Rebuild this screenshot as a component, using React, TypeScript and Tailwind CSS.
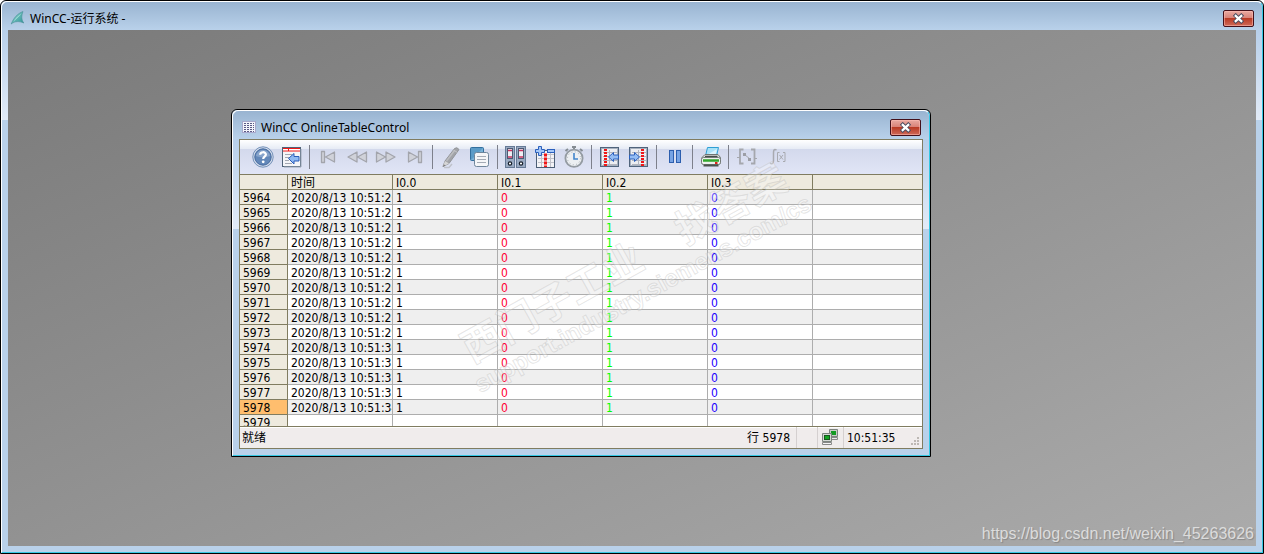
import type { ReactNode } from "react";

type WindowProps = {
  title: string;
  icon: ReactNode;
  className?: string;
  children: ReactNode;
};

const CloseButton = () => (
  <button
    type="button"
    aria-label="Close"
    className="flex h-[17px] w-[31px] items-center justify-center rounded-xs border border-[#43101a] bg-[linear-gradient(#e9aaa2,#d98379_45%,#b93a25_50%,#cf6a58)] shadow-[inset_0_0_0_1px_rgba(255,190,180,0.55)]"
  >
    <svg width="13" height="11" viewBox="0 0 13 11" aria-hidden="true">
      <path
        d="M3.7 2.7 L9.3 8.3 M9.3 2.7 L3.7 8.3"
        stroke="#4a4c60"
        strokeWidth="4"
        strokeLinecap="square"
      />
      <path
        d="M3.7 2.9 L9.3 8.1 M9.3 2.9 L3.7 8.1"
        stroke="#fff"
        strokeWidth="2.2"
        strokeLinecap="square"
      />
    </svg>
  </button>
);

const SideFrame = () => (
  <div className="w-1.5 shrink-0 bg-[linear-gradient(#b7cfea,#e2ebf7_90px,#b9d1ea_90px)]" />
);

const AeroWindow = ({ title, icon, className = "", children }: WindowProps) => (
  <section
    className={`flex flex-col overflow-hidden rounded-t-md border border-black bg-[#b9d1ea] ${className}`}
  >
    <div className="flex flex-1 flex-col rounded-t-md border border-t-white border-r-[#35c8e4] border-b-[#35c8e4] border-l-white">
      <header className="flex h-7 items-center gap-1 rounded-t-md bg-[linear-gradient(#99b4d1,#b9d1ea)] px-2 pt-1">
        {icon}
        <h1 className="flex-1 pt-0.5 font-['Noto_Sans','Noto_Sans_CJK_SC',sans-serif] text-xs text-black">
          {title}
        </h1>
        <CloseButton />
      </header>
      <div className="flex flex-1">
        <SideFrame />
        <div className="flex min-w-0 flex-1 flex-col">{children}</div>
        <SideFrame />
      </div>
      <div className="h-1.5" />
    </div>
  </section>
);

const AppIcon = () => (
  <svg width="16" height="16" viewBox="0 0 16 16" aria-hidden="true">
    <defs>
      <linearGradient id="fin" x1="0" y1="0" x2="1" y2="1">
        <stop offset="0" stopColor="#8fd6cf" />
        <stop offset="1" stopColor="#2f9396" />
      </linearGradient>
    </defs>
    <path
      d="M13 1.5 C7.5 3.5 3.5 8 1.2 14 C5 11 9 11 13.8 13 C11.4 10 11.2 6 13 1.5Z"
      fill="url(#fin)"
      stroke="#4a8f97"
      strokeWidth="0.6"
    />
    <path d="M11.5 3.5 C7.5 6 5 8.5 3.5 12 C6 9 9 6.5 11.5 3.5Z" fill="#a9e4dc" />
  </svg>
);

const GridIcon = () => (
  <svg width="16" height="16" viewBox="0 0 16 16" aria-hidden="true">
    <rect x="1" y="2" width="14" height="12" fill="#f4f4fb" />
    <path d="M1 2.5H15M1 13.5H15M1.5 2V14M14.5 2V14" stroke="#a9a9cc" />
    <path
      d="M3 4.5H13M3 6.5H13M3 8.5H13M3 10.5H13M3 12.5H13"
      stroke="#5b5b85"
      strokeDasharray="2 1"
    />
  </svg>
);

const Icon = ({ children }: { children: ReactNode }) => (
  <svg
    width="24"
    height="24"
    viewBox="0 0 24 24"
    fill="none"
    className="shrink-0"
    aria-hidden="true"
  >
    {children}
  </svg>
);

const HelpIcon = () => (
  <Icon>
    <circle cx="12" cy="12" r="10.2" fill="#d5deec" stroke="#7390b8" />
    <circle cx="12" cy="12" r="8.2" fill="#6388b9" stroke="#44689d" />
    <path d="M4.8 11 A7.3 7.3 0 0 1 19.2 11 Q12 13.5 4.8 11Z" fill="#87a4cb" />
    <path
      d="M9.2 9.8 C9.2 6.4 14.9 6.4 14.9 9.6 C14.9 11.6 12.2 11.8 12.2 14"
      stroke="#fff"
      strokeWidth="2.2"
    />
    <circle cx="12.2" cy="16.8" r="1.4" fill="#fff" />
  </Icon>
);

const SheetIcon = () => (
  <Icon>
    <rect x="2.5" y="2.5" width="18" height="19" fill="#f4f5f8" stroke="#4f6276" />
    <rect x="3" y="3" width="17" height="3" fill="#fff" />
    <path d="M3 3.5H20M3 6H20M8.5 3V6" stroke="#f01818" />
    <path d="M5 9.5H12M5 12.5H9M5 15.5H9M5 18.5H12" stroke="#a3a8b2" />
    <path
      d="M8.5 13.5 L14 8.5 V11.5 H19 V16 H14 V19Z"
      fill="#8fb9f3"
      stroke="#2a5cb8"
    />
    <path d="M21 4V22H4" stroke="#9ca6b5" />
  </Icon>
);

const mediaPaths = {
  first: "M5.5 6.5H8.5V17.5H5.5Z M18.5 7V17L9.5 12Z",
  rewind: "M12 7V17L3 12Z M21.5 7V17L12.5 12Z",
  forward: "M2.5 7V17L11.5 12Z M12 7V17L21 12Z",
  last: "M5.5 7V17L14.5 12Z M15.5 6.5H18.5V17.5H15.5Z",
};

const MediaIcon = ({ kind }: { kind: keyof typeof mediaPaths }) => (
  <Icon>
    <path
      d={mediaPaths[kind]}
      fill="#d0d2d9"
      stroke="#a3a5ac"
      strokeWidth="1.3"
      strokeLinejoin="round"
    />
  </Icon>
);

const PencilIcon = () => (
  <Icon>
    <path d="M5 22.5H10L13 19" stroke="#bfc2ca" strokeWidth="1.5" />
    <path d="M4 21.5 L6 16 L15.5 3.5 Q18 1.5 20 4.5 L10 18.5Z" fill="#a2a4a8" stroke="#939599" />
    <path d="M7.5 16 L15.5 5.5" stroke="#bcbdc0" strokeWidth="1.5" />
    <path d="M4 21.5L6 16L10 18.5Z" fill="#d6d6d6" />
    <path d="M3.5 22L5 19.5L6.5 20.5Z" fill="#777" />
    <path d="M14.5 5L18.5 7.5" stroke="#c4c5c8" />
  </Icon>
);

const CopyIcon = () => (
  <Icon>
    <rect x="2.5" y="2.5" width="13" height="13" rx="1" fill="#5b9bc7" stroke="#34709e" />
    <path d="M3 15L15 3V15Z" fill="#79b2d7" />
    <rect x="6.5" y="7.5" width="14" height="14" rx="2" fill="#f5f6f8" stroke="#70869b" />
    <path d="M9 11.5H18M9 14.5H18M9 17.5H18" stroke="#a4abb5" />
  </Icon>
);

const BindersIcon = () => (
  <Icon>
    {[1.5, 12.5].map((x) => (
      <g key={x} transform={`translate(${x} 0)`}>
        <rect x="0" y="1.5" width="9" height="21" fill="#9aaac2" stroke="#667a96" />
        <rect x="2" y="3.5" width="5" height="10" fill="#eeeff4" stroke="#4c5a72" />
        <path d="M2.5 5.5H6.5M2.5 12H6.5" stroke="#c8315e" strokeWidth="1.6" />
        <circle cx="4.5" cy="18.5" r="1.7" fill="#fff" stroke="#18202c" strokeWidth="1.2" />
      </g>
    ))}
  </Icon>
);

const ColumnsIcon = () => (
  <Icon>
    <rect x="3.5" y="5.5" width="18" height="17" fill="#f3f3f6" stroke="#4c5e75" />
    <path d="M5 9.5H21M5 13.5H21M5 17.5H21M8.5 8V22M17.5 8V22" stroke="#c1c2ca" />
    <path d="M12.5 8.5V22" stroke="#f01414" strokeWidth="3" strokeDasharray="3 1" />
    <path
      d="M5.5 1.5H8.5V4.5H11.5V7.5H8.5V10.5H5.5V7.5H2.5V4.5H5.5Z"
      fill="#a5c7f8"
      stroke="#2b60bd"
    />
    <rect x="14.5" y="4.5" width="7" height="3" fill="#a5c7f8" stroke="#2b60bd" />
  </Icon>
);

const ClockIcon = () => (
  <Icon>
    <path d="M10 2H14M12 2V5M3.5 6L6 4M18 4L20.5 6" stroke="#858c92" strokeWidth="2" />
    <circle cx="12" cy="13.3" r="8.6" fill="#eceff2" stroke="#949ba2" strokeWidth="1.8" />
    <circle cx="12" cy="13.3" r="6.5" stroke="#a8afb5" strokeDasharray="1 2.4" />
    <path d="M12 8V14H16" stroke="#4386cb" strokeWidth="1.6" />
  </Icon>
);

const SelectColumnIcon = ({ flip = false }: { flip?: boolean }) => (
  <Icon>
    <rect x="2.5" y="2.5" width="18" height="19" fill="#eceef2" stroke="#50647c" />
    <rect x="3.5" y="3.5" width="16" height="17" stroke="#a7b1bf" />
    <path d="M5 7.5H19M5 11.5H19M5 15.5H19M5 19.5H19M11.5 5V20" stroke="#b3b6bf" />
    <path
      d={flip ? "M15.5 4V21" : "M7.5 4V21"}
      stroke="#ef1717"
      strokeWidth="3"
      strokeDasharray="2 1"
    />
    <path
      d={
        flip
          ? "M12.5 12 L7.5 7.5 V10 H2.5 V14 H7.5 V16.5Z"
          : "M10.5 12 L15.5 7.5 V10 H20.5 V14 H15.5 V16.5Z"
      }
      fill="#94bdf4"
      stroke="#2b60bd"
    />
  </Icon>
);

const PauseIcon = () => (
  <Icon>
    <rect x="6.5" y="5.5" width="4" height="12" fill="#76a3e4" stroke="#2c5eae" />
    <rect x="13.5" y="5.5" width="4" height="12" fill="#76a3e4" stroke="#2c5eae" />
  </Icon>
);

const PrinterIcon = () => (
  <Icon>
    <path d="M6.5 11 L8.5 2.5H19.5L17.5 11Z" fill="#a8e2f8" stroke="#2f9fd4" />
    <path d="M8 10L18 4L16.5 10Z" fill="#d9f4fd" />
    <path d="M3 12.5L6 9.5H19L21.5 12.5V18H3Z" fill="#dce0de" stroke="#6f7673" />
    <path d="M6 11.5H18.5" stroke="#444b49" strokeWidth="1.5" />
    <rect x="2.5" y="12.5" width="19" height="7" rx="2" fill="#eef0ee" stroke="#737a76" />
    <path d="M4 15.5H20" stroke="#31a72d" strokeWidth="2.5" />
    <path d="M4.5 20.5H19.5" stroke="#4b524f" strokeWidth="2" />
    <rect x="16" y="17" width="2.5" height="2" fill="#e0231b" />
  </Icon>
);

const LinkIcon = () => (
  <Icon>
    <path d="M8.5 4.5H5V18.5H8.5M16 4.5H19.5V18.5H16" stroke="#a5a7ad" strokeWidth="1.8" />
    <path d="M2 12.5H5M19 13.5H22M9.5 9.5L15 14" stroke="#a5a7ad" />
    <rect x="8" y="8" width="3" height="3" fill="#9c9ea5" />
    <rect x="13" y="13" width="3" height="3" fill="#9c9ea5" />
  </Icon>
);

const FunctionIcon = () => (
  <Icon>
    <path
      d="M12.5 5 C10 3.5 9.5 5.5 9.5 8 V16 C9.5 18.5 7.5 19.5 6 18"
      stroke="#a8aab0"
      strokeWidth="1.5"
    />
    <path
      d="M15.5 7.5H13.5V16.5H15.5M19 7.5H21V16.5H19M15.5 10L19 14.5M19 10L15.5 14.5"
      stroke="#a8aab0"
    />
  </Icon>
);

const NetworkIcon = () => (
  <svg width="17" height="17" viewBox="0 0 17 17" aria-hidden="true">
    <path d="M7.5 0.5H15.5V7.5H7.5Z" fill="#c8ccc8" stroke="#7d847f" />
    <rect x="9" y="2" width="5" height="4" fill="#139b22" />
    <path d="M8.5 8.5H15.5V10.5H8.5Z" fill="#ececec" stroke="#888" />
    <path d="M0.5 4.5H9.5V12.5H0.5Z" fill="#d4d8d4" stroke="#7d847f" />
    <rect x="2.5" y="6.5" width="5" height="4" fill="#12a522" stroke="#17551d" />
    <path d="M0.5 13.5H9.5V15.5H0.5Z" fill="#f4f4f4" stroke="#888" />
  </svg>
);

type Tool = { label: string; icon: ReactNode; disabled?: boolean };

const toolGroups: Tool[][] = [
  [
    { label: "Help", icon: <HelpIcon /> },
    { label: "Configuration dialog", icon: <SheetIcon /> },
  ],
  [
    { label: "First record", icon: <MediaIcon kind="first" />, disabled: true },
    { label: "Previous record", icon: <MediaIcon kind="rewind" />, disabled: true },
    { label: "Next record", icon: <MediaIcon kind="forward" />, disabled: true },
    { label: "Last record", icon: <MediaIcon kind="last" />, disabled: true },
  ],
  [
    { label: "Edit", icon: <PencilIcon />, disabled: true },
    { label: "Copy rows", icon: <CopyIcon /> },
  ],
  [
    { label: "Select archive", icon: <BindersIcon /> },
    { label: "Select columns", icon: <ColumnsIcon /> },
    { label: "Select time range", icon: <ClockIcon /> },
  ],
  [
    { label: "Previous column", icon: <SelectColumnIcon /> },
    { label: "Next column", icon: <SelectColumnIcon flip /> },
  ],
  [{ label: "Stop", icon: <PauseIcon /> }],
  [{ label: "Print", icon: <PrinterIcon /> }],
  [
    { label: "Connect backup", icon: <LinkIcon />, disabled: true },
    { label: "Statistics", icon: <FunctionIcon />, disabled: true },
  ],
];

const Toolbar = () => (
  <div className="flex h-[34px] items-center bg-[linear-gradient(#ffffff,#e6ebf5_9px,#d3d9ec_9px,#e1e5f6)] px-2">
    {toolGroups.map((group, i) => (
      <div key={i} className="flex items-center">
        {i > 0 && <div className="mx-[3px] h-6 w-px bg-[#7d808b]" />}
        {group.map((tool) => (
          <button
            key={tool.label}
            type="button"
            aria-label={tool.label}
            disabled={tool.disabled}
            className="flex h-6 w-[29px] items-center justify-center"
          >
            {tool.icon}
          </button>
        ))}
      </div>
    ))}
  </div>
);

const columns = ["时间", "I0.0", "I0.1", "I0.2", "I0.3"];

// the seconds run past the column and get cut off
const rows = Array.from({ length: 16 }, (_, i) => ({
  id: 5964 + i,
  time: i < 15 ? `2020/8/13 10:51:${20 + i}` : "",
  values: i < 15 ? ["1", "0", "1", "0"] : ["", "", "", ""],
}));

const valueColors = ["text-black", "text-[#ff0033]", "text-[#00ff00]", "text-[#2000ff]"];

const SELECTED_ROW = 5978;

const DataTable = () => (
  <div className="h-[251px] overflow-hidden bg-white">
    <table className="w-full table-fixed border-separate border-spacing-0 text-left leading-3">
      <colgroup>
        <col className="w-12" />
        <col className="w-[105px]" />
        <col className="w-[105px]" />
        <col className="w-[105px]" />
        <col className="w-[105px]" />
        <col className="w-[105px]" />
        <col />
      </colgroup>
      <thead>
        <tr className="bg-[#eeeade]">
          <th className="h-[15px] border-r border-b border-[#807c60] p-0" />
          {columns.map((name) => (
            <th
              key={name}
              scope="col"
              className="h-[15px] border-r border-b border-[#807c60] p-0 pt-0.5 pl-[3px] font-normal"
            >
              {name}
            </th>
          ))}
          <th className="h-[15px] border-b border-[#807c60] p-0" />
        </tr>
      </thead>
      <tbody>
        {rows.map((row, i) => (
          <tr key={row.id} className={i % 2 === 0 ? "bg-[#efefef]" : "bg-white"}>
            <th
              scope="row"
              className={`h-[15px] border-r border-b border-[#807c60] p-0 pt-0.5 pl-[3px] font-normal ${
                row.id === SELECTED_ROW ? "bg-[#ffbe6e]" : "bg-[#eeeade]"
              }`}
            >
              {row.id}
            </th>
            <td className="h-[15px] overflow-hidden border-r border-b border-[#adadad] p-0 pt-0.5 pl-[3px] whitespace-nowrap">
              {row.time}
            </td>
            {row.values.map((value, c) => (
              <td
                key={c}
                className={`h-[15px] border-r border-b border-[#adadad] p-0 pt-0.5 pl-[3px] ${valueColors[c]}`}
              >
                {value}
              </td>
            ))}
            <td className="h-[15px] border-b border-[#adadad] p-0" />
          </tr>
        ))}
      </tbody>
    </table>
  </div>
);

const StatusBar = () => (
  <footer className="flex h-[22px] items-stretch border-t border-[#807c60] bg-[#f0ecec] leading-[22px] shadow-[inset_0_1px_0_#fff]">
    <span className="flex-1 pl-0.5">就绪</span>
    <span className="border-r border-[#d5d0d0] pr-1.5">行 {SELECTED_ROW}</span>
    <span className="w-[21px] border-r border-[#d5d0d0]" />
    <span className="flex w-[26px] items-center justify-center border-r border-[#d5d0d0]">
      <NetworkIcon />
    </span>
    <time className="w-[66px] pl-[3px]">10:51:35</time>
    <svg width="12" height="21" viewBox="0 0 12 21" aria-hidden="true">
      <path
        d="M7 10h2v2h-2zM4 13h2v2h-2zM7 13h2v2h-2zM1 16h2v2h-2zM4 16h2v2h-2zM7 16h2v2h-2z"
        fill="#bdb8b4"
      />
    </svg>
  </footer>
);

const Watermark = () => (
  <svg
    className="pointer-events-none absolute top-0.5 left-[208px]"
    width="400"
    height="270"
    viewBox="0 0 400 270"
    aria-hidden="true"
  >
    <g
      transform="rotate(-29 40 255)"
      fill="#ffffff"
      fillOpacity="0.3"
      stroke="#b0b0b0"
      strokeOpacity="0.32"
      strokeWidth="1"
      fontWeight="700"
    >
      <text x="42" y="218" fontSize="40" fontFamily="Noto Sans CJK SC, sans-serif">
        西门子工业
      </text>
      <text x="286" y="218" fontSize="40" fontFamily="Noto Sans CJK SC, sans-serif">
        找答案
      </text>
      <text x="35" y="248" fontSize="24" fontFamily="Liberation Sans, sans-serif">
        support.industry.siemens.com/cs
      </text>
    </g>
  </svg>
);

const App = () => {
  return (
    <AeroWindow title="WinCC-运行系统 -" icon={<AppIcon />} className="min-h-screen">
      <main className="relative flex-1 overflow-hidden bg-linear-to-br from-[#7a7a7a] to-[#ababab]">
        <AeroWindow
          title="WinCC OnlineTableControl"
          icon={<GridIcon />}
          className="absolute top-[79px] left-[223px] w-[700px]"
        >
          <div className="relative flex flex-col border border-[#807c60] font-['DejaVu_Sans_Condensed','DejaVu_Sans','Noto_Sans_CJK_SC',sans-serif] text-xs text-black">
            <Toolbar />
            <div className="h-px bg-[#807c60]" />
            <DataTable />
            <StatusBar />
            <Watermark />
          </div>
        </AeroWindow>
        <p className="absolute right-0.5 bottom-0 font-['Liberation_Sans',sans-serif] text-base text-[#dcdcdc] [text-shadow:1px_1px_1px_#888]">
          https://blog.csdn.net/weixin_45263626
        </p>
      </main>
    </AeroWindow>
  );
};

export default App;
